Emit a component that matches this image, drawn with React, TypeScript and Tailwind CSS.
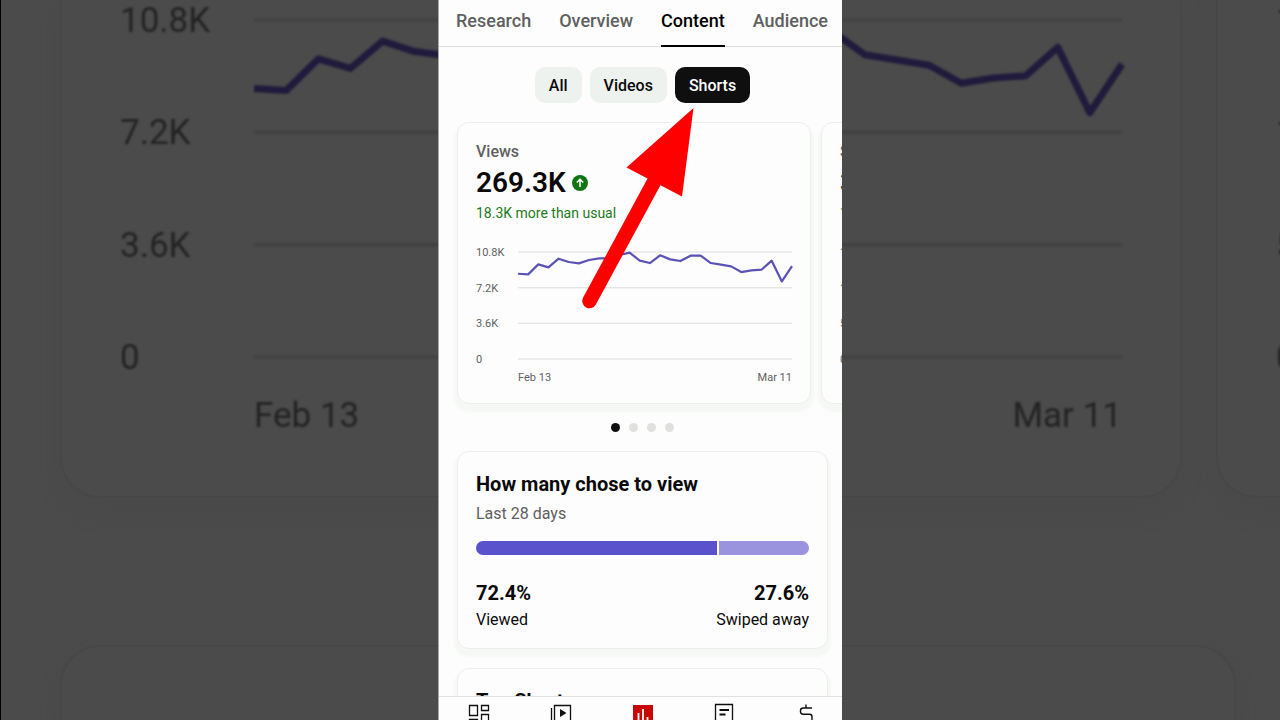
import { useState } from 'react'
import { clsx } from 'clsx'

const TABS = ['Research', 'Overview', 'Content', 'Audience']
const FILTERS = ['All', 'Videos', 'Shorts']

// 28 daily values, measured down from the top grid line (0) to the axis (320)
const VIEWS = [
  65, 67, 37, 46, 20, 30, 34, 24, 19, 19, 9, 2, 26, 33, 10, 22, 27, 11, 11, 33, 38, 43, 60, 55, 53,
  26, 88, 42,
]

type ChartProps = {
  labels: string[]
  from: string
  to: string
  points: number[]
  backdrop?: boolean
}

function Chart({ labels, from, to, points, backdrop }: ChartProps) {
  return (
    <div
      className={clsx(
        backdrop
          ? 'text-[35px] leading-9 text-[#232323] blur-[1px]'
          : 'text-[11px] leading-3 text-[#606060]',
      )}
    >
      <div className={clsx('flex', backdrop ? 'h-[373px]' : 'h-[119px]')}>
        <div
          className={clsx(
            'flex shrink-0 flex-col justify-between',
            backdrop ? 'w-[134px]' : 'w-[42px]',
          )}
        >
          {labels.map((label) => (
            <span key={label}>{label}</span>
          ))}
        </div>
        <div className={clsx('min-w-0 flex-1', backdrop ? 'pt-[17px] pb-[19px]' : 'pt-[5px] pb-[7px]')}>
          <svg
            className="block h-full w-full overflow-visible"
            viewBox="0 0 27 320"
            preserveAspectRatio="none"
            fill="none"
            aria-hidden="true"
          >
            {[0, 1, 2, 3].map((i) => (
              <line
                key={i}
                x1="0"
                x2="27"
                y1={(i * 320) / 3}
                y2={(i * 320) / 3}
                stroke={backdrop ? '#414141' : '#dcdcdc'}
                strokeWidth={backdrop ? 3 : 1}
                vectorEffect="non-scaling-stroke"
              />
            ))}
            <polyline
              points={points.map((y, x) => `${x},${y}`).join(' ')}
              stroke={backdrop ? '#201b3c' : '#5b52b5'}
              strokeWidth={backdrop ? 7 : 2.2}
              strokeLinejoin="round"
              vectorEffect="non-scaling-stroke"
            />
          </svg>
        </div>
      </div>
      <div
        className={clsx('flex justify-between', backdrop ? 'mt-[22px] pl-[134px]' : 'mt-1.5 pl-[42px]')}
      >
        <span>{from}</span>
        <span>{to}</span>
      </div>
    </div>
  )
}

// Enlarged, dimmed copy of the analytics cards behind the phone
function Backdrop() {
  return (
    <div
      aria-hidden="true"
      className="absolute inset-0 overflow-hidden border-l border-black bg-[#4b4b4b] pl-[59px]"
    >
      <div className="flex gap-[34px]">
        <div className="h-[498px] w-[1122px] shrink-0 rounded-b-[40px] border-2 border-t-0 border-[#474747] px-[58px] pt-[3px] shadow-[0_14px_14px_4px_#494a49]">
          <Chart backdrop labels={['10.8K', '7.2K', '3.6K', '0']} from="Feb 13" to="Mar 11" points={VIEWS} />
        </div>
        <div className="h-[498px] w-[1122px] shrink-0 rounded-b-[40px] border-2 border-t-0 border-[#474747] px-[58px] pt-[3px] shadow-[0_14px_14px_4px_#494a49]">
          <Chart backdrop labels={['15', '10', '5', '0']} from="Feb 13" to="Mar 11" points={VIEWS} />
        </div>
      </div>
      <div className="mt-[147px] mr-11 h-60 rounded-[40px] border-2 border-[#474747] shadow-[0_14px_14px_4px_#494a49]" />
    </div>
  )
}

const cardClass =
  'rounded-xl border border-[#eceeec] bg-[#fdfdfd] px-[18px] shadow-[0_5px_3px_3px_#f5f8f5]'

type StatCardProps = {
  title: string
  value: string
  delta: string
  labels: string[]
}

function StatCard({ title, value, delta, labels }: StatCardProps) {
  return (
    <section className={clsx(cardClass, 'w-[354px] shrink-0 pt-[17px] pb-[19px]')}>
      <h2 className="text-base font-medium text-[#606060]">{title}</h2>
      <div className="mt-[3px] flex items-center gap-1.5">
        <span className="text-[28px] leading-8 font-semibold">{value}</span>
        <svg className="size-4" viewBox="0 0 16 16" fill="none" aria-hidden="true">
          <circle cx="8" cy="8" r="8" fill="#107516" />
          <path d="M8 12V4.5M4.8 7.5 8 4.3l3.2 3.2" stroke="#fff" strokeWidth="1.5" />
        </svg>
      </div>
      <p className="mt-1 mb-6 text-sm text-[#1b7a20]">{delta}</p>
      <Chart labels={labels} from="Feb 13" to="Mar 11" points={VIEWS} />
    </section>
  )
}

const NAV_ITEMS = [
  {
    label: 'Dashboard',
    icon: (
      <path
        d="M2.5 2.5h8v10h-8zM14.5 2.5h7v5h-7zM14.5 11.5h7v10h-7zM2.5 16.5h8v5h-8z"
        stroke="#0f0f0f"
        strokeWidth="1.3"
      />
    ),
  },
  {
    label: 'Content',
    icon: (
      <>
        <path d="M2.5 5v17M5.5 2.5h16v17h-16z" stroke="#0f0f0f" strokeWidth="1.3" />
        <path d="m11 6 6.5 4-6.5 4z" fill="#0f0f0f" />
      </>
    ),
  },
  {
    label: 'Analytics',
    icon: (
      <>
        <path d="M2 2h20v20H2z" fill="#c90505" />
        <path d="M7.5 10v9M12 6v13M16.5 14v5" stroke="#fff" strokeWidth="1.8" />
      </>
    ),
  },
  {
    label: 'Comments',
    icon: (
      <>
        <path d="M3.5 1.5h17v17h-17z" stroke="#0f0f0f" strokeWidth="1.3" />
        <path d="M7.5 7h9.5M7.5 11.5h6" stroke="#0f0f0f" strokeWidth="1.8" />
      </>
    ),
  },
  {
    label: 'Earn',
    icon: (
      <path
        d="M12 1.5V5M18 5H9.5C7.6 5 6.5 6 6.5 7.6v1.2c0 1.6 1 2.4 2.6 2.4h6.300c1.600 0 2.600 1 2.600 2.600V16c0 1.600-1 2.500-2.600 2.500H6.500"
        stroke="#0f0f0f"
        strokeWidth="1.4"
      />
    ),
  },
]

export default function App() {
  const [tab, setTab] = useState('Content')
  const [filter, setFilter] = useState('Shorts')
  const [slide, setSlide] = useState(0)

  return (
    <div className="relative flex h-screen justify-center overflow-hidden font-['Roboto',sans-serif] text-[#0a0a0a]">
      <Backdrop />

      <div className="relative flex w-full max-w-[404px] flex-col overflow-hidden border-l border-[#a8a8a8] bg-[#fdfdfd]">
        <nav className="flex h-[47px] shrink-0 gap-7 border-b border-[#dcdce2] pl-[17px]">
          {TABS.map((name) => (
            <button
              key={name}
              onClick={() => setTab(name)}
              className={clsx(
                '-mb-px border-b-2 pb-1 text-lg font-medium',
                name === tab ? 'border-black text-black' : 'border-transparent text-[#606060]',
              )}
            >
              {name}
            </button>
          ))}
        </nav>

        <main className="flex min-h-0 flex-1 flex-col gap-[19px] overflow-hidden pt-5 pr-3.5 pl-[18px]">
          <div className="flex shrink-0 justify-center gap-2">
            {FILTERS.map((name) => (
              <button
                key={name}
                onClick={() => setFilter(name)}
                className={clsx(
                  'h-9 rounded-[10px] px-3.5 pt-px text-base font-medium',
                  name === filter ? 'bg-[#0f0f0f] text-white' : 'bg-[#eef2ef]',
                )}
              >
                {name}
              </button>
            ))}
          </div>

          <div className="flex shrink-0 gap-2.5">
            <StatCard
              title="Views"
              value="269.3K"
              delta="18.3K more than usual"
              labels={['10.8K', '7.2K', '3.6K', '0']}
            />
            <StatCard
              title="Subscribers"
              value="36"
              delta="12 more than usual"
              labels={['15', '10', '5', '0']}
            />
          </div>

          <div className="flex shrink-0 justify-center gap-[9px]">
            {[0, 1, 2, 3].map((i) => (
              <button
                key={i}
                aria-label={`Card ${i + 1}`}
                onClick={() => setSlide(i)}
                className={clsx('size-[9px] rounded-full', i === slide ? 'bg-[#0f0f0f]' : 'bg-[#dfe1df]')}
              />
            ))}
          </div>

          <section className={clsx(cardClass, 'shrink-0 pt-[18px] pb-4')}>
            <h2 className="text-xl font-bold">How many chose to view</h2>
            <p className="mt-1 text-base text-[#606060]">Last 28 days</p>
            <div className="mt-[15px] flex h-3.5 gap-0.5 overflow-hidden rounded-full">
              <div className="bg-[#5a52cc]" style={{ width: '72.4%' }} />
              <div className="flex-1 bg-[#9a94de]" />
            </div>
            <dl className="mt-6 flex justify-between">
              <div className="flex flex-col-reverse gap-px">
                <dt>Viewed</dt>
                <dd className="text-xl font-bold">72.4%</dd>
              </div>
              <div className="flex flex-col-reverse gap-px text-right">
                <dt>Swiped away</dt>
                <dd className="text-xl font-bold">27.6%</dd>
              </div>
            </dl>
          </section>

          <section className={clsx(cardClass, 'shrink-0 pt-[18px] pb-4')}>
            <h2 className="text-xl font-bold">Top Shorts</h2>
          </section>
        </main>

        <nav className="relative flex h-6 shrink-0 items-start justify-between overflow-hidden border-t border-[#dfe1e3] bg-[#fdfdfd] pt-1.5 pr-6 pl-7">
          {NAV_ITEMS.map((item) => (
            <button key={item.label} aria-label={item.label}>
              <svg className="size-6" viewBox="0 0 24 24" fill="none" aria-hidden="true">
                {item.icon}
              </svg>
            </button>
          ))}
        </nav>

        {/* Callout arrow pointing at the Shorts filter */}
        <svg
          className="pointer-events-none absolute top-[108px] left-[142px] h-[201px] w-[114px]"
          viewBox="0 0 114 201"
          fill="none"
          aria-hidden="true"
        >
          <path d="M112.5 0 45.5 59.5 101 88.5z" fill="#f00" />
          <path d="M8.5 193 74 72" stroke="#f00" strokeWidth="14.5" strokeLinecap="round" />
        </svg>
      </div>
    </div>
  )
}
